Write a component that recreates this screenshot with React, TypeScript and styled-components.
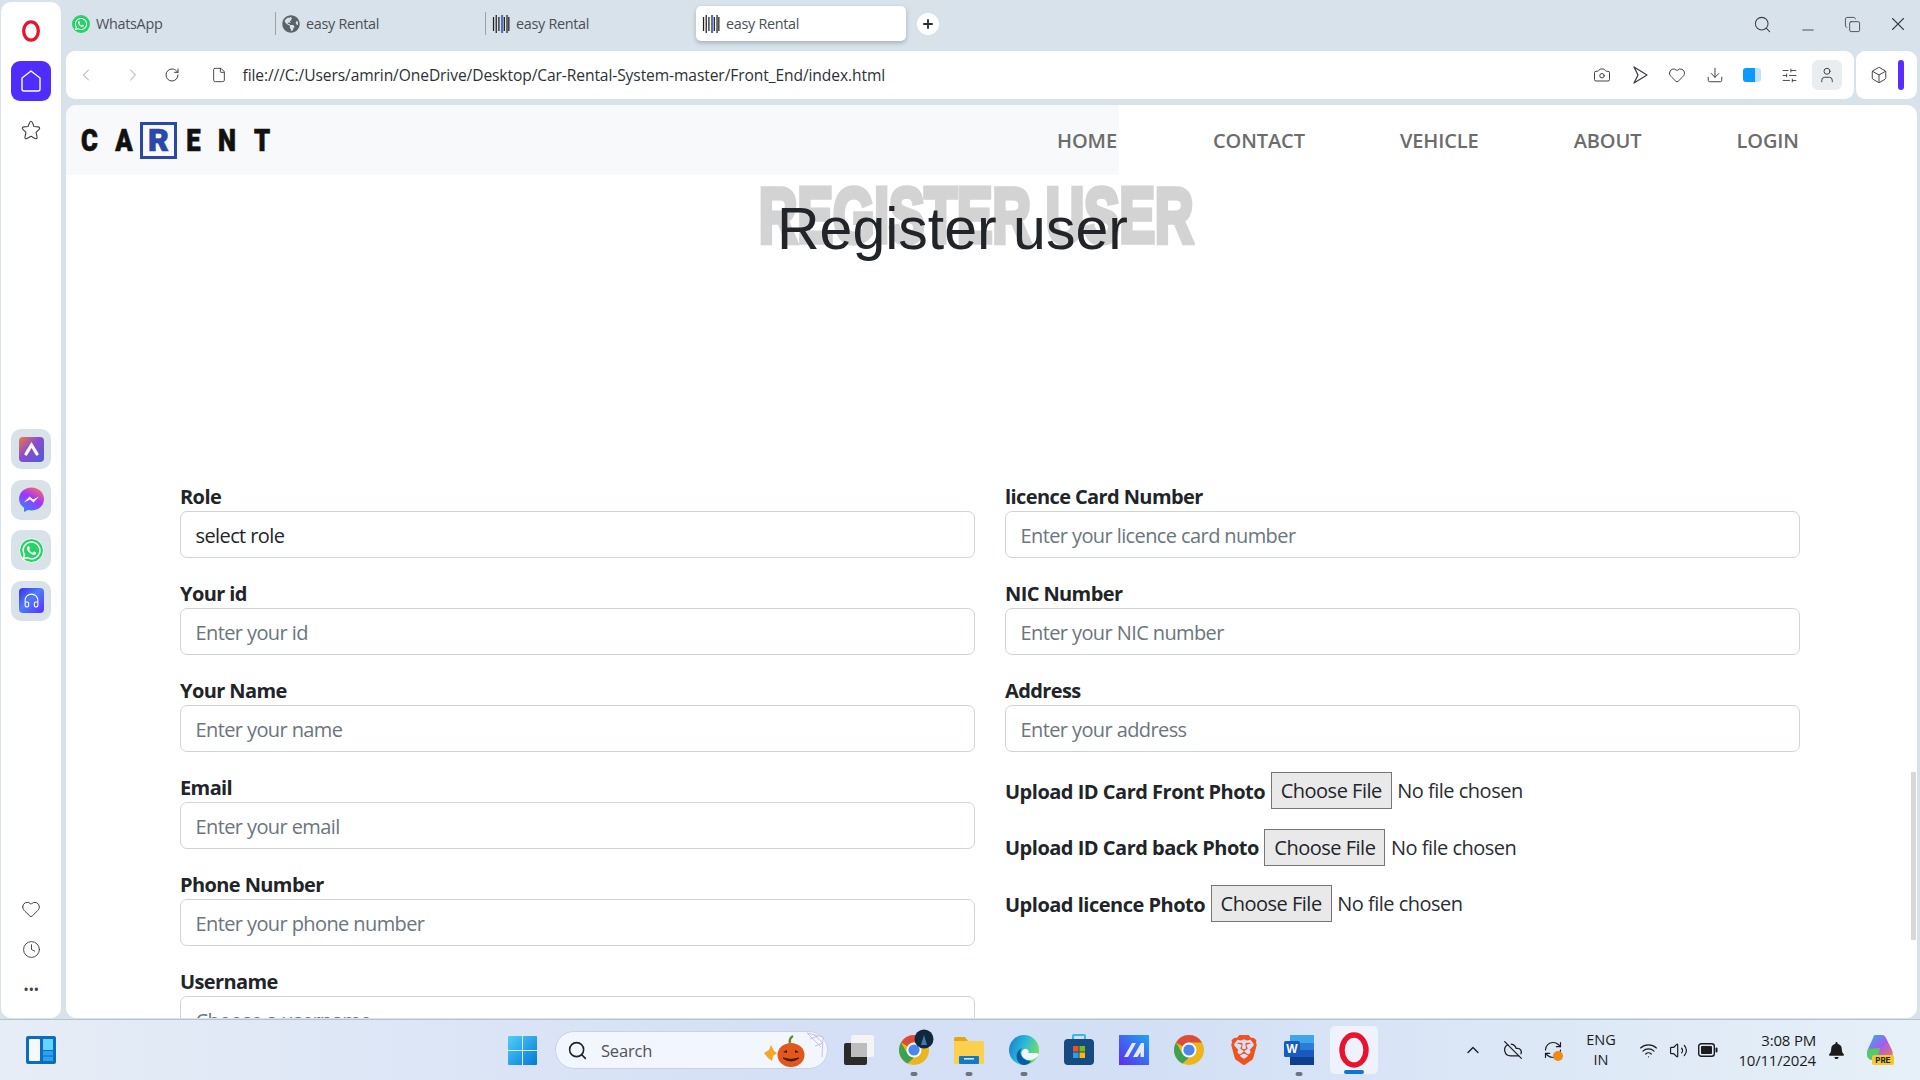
import styled, { createGlobalStyle } from "styled-components";
import {
	ChevronLeft,
	ChevronRight,
	ChevronUp,
	RotateCw,
	File,
	Camera,
	Heart,
	Download,
	Clock,
	Search,
	User,
	Box,
	SlidersHorizontal,
	Plus,
	X,
	Minus,
	Copy,
	Wifi,
	Volume2,
	CloudOff,
	RefreshCw,
	Headphones,
} from "lucide-react";
import { FaWhatsapp, FaGlobeAmericas, FaBell } from "react-icons/fa";
import { SiBrave } from "react-icons/si";

const UI_FONT = `"Open Sans", "Noto Sans", sans-serif`;

const leftFields = [
	{ label: "Role", value: "select role" },
	{ label: "Your id", placeholder: "Enter your id" },
	{ label: "Your Name", placeholder: "Enter your name" },
	{ label: "Email", placeholder: "Enter your email" },
	{ label: "Phone Number", placeholder: "Enter your phone number" },
	{ label: "Username", placeholder: "Choose a username" },
];

const rightFields = [
	{ label: "licence Card Number", placeholder: "Enter your licence card number" },
	{ label: "NIC Number", placeholder: "Enter your NIC number" },
	{ label: "Address", placeholder: "Enter your address" },
];

const uploads = ["Upload ID Card Front Photo", "Upload ID Card back Photo", "Upload licence Photo"];

function OperaLogo({ size = 22 }: { size?: number }) {
	return (
		<svg width={size} height={size} viewBox="0 0 24 24">
			<ellipse cx="12" cy="12" rx="8" ry="10" fill="none" stroke="#e8132f" strokeWidth="3.6" />
		</svg>
	);
}

function BarcodeIcon() {
	const bars = [1, 4, 7, 10, 13, 16, 18];
	return (
		<svg width="18" height="20" viewBox="0 0 20 20" preserveAspectRatio="none">
			{bars.map((x, i) => (
				<rect key={x} x={x} y={i % 2 ? 1 : 3} width={i === 3 ? 2.4 : 1.4} height={i % 2 ? 18 : 14} fill={i === 3 ? "#5470c6" : "#222"} />
			))}
		</svg>
	);
}

function HomeGlyph() {
	return (
		<svg width="22" height="24" viewBox="0 0 22 24" fill="none" stroke="#fff" strokeWidth="1.4">
			<path d="M11 2 L20 9 V20 a2 2 0 0 1 -2 2 H4 a2 2 0 0 1 -2 -2 V9 Z" strokeLinejoin="round" />
		</svg>
	);
}

function StarGlyph() {
	return (
		<svg width="22" height="22" viewBox="0 0 24 24" fill="none" stroke="#3a3f44" strokeWidth="1.2" strokeLinejoin="round">
			<path d="M12 2.5 C13 2.5 13.5 3.5 14 5 L15.2 8.2 L19.8 8.6 C21.6 8.8 22 10.2 20.8 11.4 L17.5 14.6 L18.6 19.6 C19 21.2 17.8 22 16.4 21.2 L12 18.8 L7.6 21.2 C6.2 22 5 21.2 5.4 19.6 L6.5 14.6 L3.2 11.4 C2 10.2 2.4 8.8 4.2 8.6 L8.8 8.2 L10 5 C10.5 3.5 11 2.5 12 2.5 Z" />
		</svg>
	);
}

function PlayGlyph() {
	return (
		<svg width="18" height="20" viewBox="0 0 18 20" fill="none" stroke="#3a3f44" strokeWidth="1.3" strokeLinejoin="round">
			<path d="M3 2 L16 10 L3 18 L7 10 Z" />
		</svg>
	);
}

function ArcAppIcon() {
	return (
		<svg width="25" height="25" viewBox="0 0 25 25">
			<defs>
				<linearGradient id="arcBg" x1="0" y1="0" x2="1" y2="1">
					<stop offset="0" stopColor="#ee7a3c" />
					<stop offset="0.45" stopColor="#8a4bd0" />
					<stop offset="1" stopColor="#4a5fd6" />
				</linearGradient>
			</defs>
			<rect width="25" height="25" rx="4" fill="url(#arcBg)" />
			<path d="M7 17 L12.5 8 L18 17" fill="none" stroke="#fff" strokeWidth="3.2" strokeLinecap="round" />
		</svg>
	);
}

function MessengerIcon() {
	return (
		<svg width="25" height="25" viewBox="0 0 25 25">
			<defs>
				<linearGradient id="msgBg" x1="0.2" y1="1" x2="0.8" y2="0">
					<stop offset="0" stopColor="#2f8cff" />
					<stop offset="0.55" stopColor="#a033ff" />
					<stop offset="1" stopColor="#ff6a68" />
				</linearGradient>
			</defs>
			<path d="M12.5 0.5 C19.5 0.5 25 5.5 25 12 C25 18.5 19.5 23.5 12.5 23.5 C11.3 23.5 10.1 23.3 9 23 L5 25 V20.8 C2 18.6 0 15.5 0 12 C0 5.5 5.5 0.5 12.5 0.5 Z" fill="url(#msgBg)" />
			<path d="M5 15.5 L10.5 9.5 L14 12.5 L20 9.5 L14.5 15.5 L11 12.5 Z" fill="#fff" />
		</svg>
	);
}

function WindowsLogo() {
	return (
		<svg width="29" height="29" viewBox="0 0 29 29">
			<defs>
				<linearGradient id="winBg" x1="0" y1="0" x2="1" y2="1">
					<stop offset="0" stopColor="#4fd0fb" />
					<stop offset="1" stopColor="#0577d4" />
				</linearGradient>
			</defs>
			<path d="M0 1 a1 1 0 0 1 1 -1 H14 V14 H0 Z M15 0 H28 a1 1 0 0 1 1 1 V14 H15 Z M0 15 H14 V29 H1 a1 1 0 0 1 -1 -1 Z M15 15 H29 V28 a1 1 0 0 1 -1 1 H15 Z" fill="url(#winBg)" />
		</svg>
	);
}

function WidgetsIcon() {
	return (
		<svg width="30" height="28" viewBox="0 0 30 28">
			<rect width="30" height="28" rx="2" fill="#0f6cbd" />
			<rect x="3" y="3" width="11" height="22" rx="1" fill="#f4f8fc" />
			<rect x="17" y="3" width="10" height="11" fill="#62d6fb" />
			<rect x="17" y="15" width="10" height="4.5" fill="#2aa3ef" />
			<rect x="17" y="20.5" width="10" height="4.5" fill="#2aa3ef" />
		</svg>
	);
}

function PumpkinDecor() {
	return (
		<svg width="62" height="38" viewBox="0 0 62 38">
			<path d="M44 2 L60 6 L59 26 M44 2 L58 16 M50 3 L59 11 M47 8 L55 5 M52 15 L60 12" stroke="#cdbfe6" strokeWidth="1" fill="none" />
			<path d="M1 22 L6 19 L8 14 L11 20 L14 22 L10 25 L9 30 L5 27 Z" fill="#f5a623" />
			<ellipse cx="28" cy="24" rx="13.5" ry="12" fill="#e2571c" />
			<path d="M27 12 Q26 7 30 5" stroke="#5e8a2b" strokeWidth="2.4" fill="none" />
			<path d="M20 21 l4 -2 v3 Z M32 19 l4 2 l-4 1 Z" fill="#43190a" />
			<path d="M20 27 Q28 33 36 27 Q28 30 20 27 Z" fill="#43190a" stroke="#43190a" />
		</svg>
	);
}

function TaskViewIcon() {
	return (
		<svg width="30" height="30" viewBox="0 0 30 30">
			<rect x="0" y="8" width="23" height="22" rx="2" fill="#2b2b2b" />
			<rect x="7" y="0" width="23" height="22" rx="2" fill="#f4f4f4" />
			<rect x="7" y="8" width="16" height="14" fill="#bdbdbd" />
		</svg>
	);
}

function ChromeLogo({ badge }: { badge?: boolean }) {
	return (
		<svg width="34" height="34" viewBox="0 0 34 34" overflow="visible">
			<circle cx="17" cy="17" r="15" fill="#e9b71d" />
			<path d="M17 2 A15 15 0 0 1 30 9.5 H17 A7.5 7.5 0 0 0 10.5 13.3 L4 9.5 A15 15 0 0 1 17 2 Z" fill="#dd4b3b" />
			<path d="M4 9.5 L10.5 20.8 A7.5 7.5 0 0 0 17 24.5 L10.5 30.5 A15 15 0 0 1 4 9.5 Z" fill="#3ba153" />
			<circle cx="17" cy="17" r="7.5" fill="#fff" />
			<circle cx="17" cy="17" r="5.6" fill="#4a86ee" />
			{badge && <circle cx="27" cy="6" r="9.5" fill="#10273f" />}
			{badge && <path d="M24 12 L27 2 L30 12 Z" fill="#3a7ea8" />}
		</svg>
	);
}

function ExplorerIcon() {
	return (
		<svg width="30" height="27" viewBox="0 0 30 27">
			<path d="M0 2 a2 2 0 0 1 2 -2 H11 L14 4 H0 Z" fill="#e2a40f" />
			<rect y="4" width="30" height="23" rx="1.5" fill="#fcd04f" />
			<rect x="5" y="19" width="20" height="8" rx="1" fill="#1378c8" />
			<rect x="10" y="21" width="10" height="1.6" fill="#cfe7fb" />
		</svg>
	);
}

function EdgeIcon() {
	return (
		<svg width="30" height="30" viewBox="0 0 30 30">
			<defs>
				<linearGradient id="edgeBg" x1="0" y1="0" x2="1" y2="0.4">
					<stop offset="0" stopColor="#1679c9" />
					<stop offset="0.55" stopColor="#2bb9d9" />
					<stop offset="1" stopColor="#6fdc6a" />
				</linearGradient>
			</defs>
			<circle cx="15" cy="15" r="15" fill="url(#edgeBg)" />
			<path d="M30 19 C26 27 14 27 12.5 19 C12 15 16 12 19 15 C20 16 20 17 19 18 L27 18 Z" fill="#f2f6fd" />
			<path d="M15 30 C6 29 5 16 13 13 C9 18 13 26 22 26 C20 29 17 30 15 30 Z" fill="#0c59a4" />
		</svg>
	);
}

function StoreIcon() {
	return (
		<svg width="30" height="32" viewBox="0 0 30 32">
			<path d="M9 6 V2 a1 1 0 0 1 1 -1 H20 a1 1 0 0 1 1 1 V6" fill="none" stroke="#39b6ea" strokeWidth="2" />
			<rect y="5" width="30" height="26" rx="4" fill="#174a82" />
			<rect x="9" y="12" width="5.5" height="5.5" fill="#f25022" />
			<rect x="15.5" y="12" width="5.5" height="5.5" fill="#7fba00" />
			<rect x="9" y="18.5" width="5.5" height="5.5" fill="#2a9fe6" />
			<rect x="15.5" y="18.5" width="5.5" height="5.5" fill="#ffb900" />
		</svg>
	);
}

function MaxIcon() {
	return (
		<svg width="30" height="30" viewBox="0 0 30 30">
			<defs>
				<linearGradient id="maxBg" x1="0" y1="1" x2="1" y2="0">
					<stop offset="0" stopColor="#5b2df0" />
					<stop offset="1" stopColor="#1fa4f4" />
				</linearGradient>
			</defs>
			<rect width="30" height="30" fill="url(#maxBg)" />
			<path d="M5 22 L13 8 H17 L9 22 Z M14 22 L22 8 H25 V22 H21.5 V17 L18.5 22 Z" fill="#e9e9f7" />
		</svg>
	);
}

function WordIcon() {
	return (
		<svg width="30" height="30" viewBox="0 0 30 30">
			<rect x="6" y="0" width="24" height="8" fill="#41a5ee" />
			<rect x="6" y="8" width="24" height="7" fill="#2b7cd3" />
			<rect x="6" y="15" width="24" height="7" fill="#185abd" />
			<rect x="6" y="22" width="24" height="8" fill="#103f91" />
			<rect x="0" y="6" width="16" height="16" rx="1.5" fill="#185abd" />
			<text x="8" y="18" textAnchor="middle" fontSize="12" fontWeight="700" fontFamily="Liberation Sans" fill="#fff">W</text>
		</svg>
	);
}

function CopilotIcon() {
	return (
		<svg width="30" height="30" viewBox="0 0 30 30">
			<defs>
				<linearGradient id="copBg" x1="0" y1="0" x2="1" y2="1">
					<stop offset="0" stopColor="#22b8ea" />
					<stop offset="0.5" stopColor="#a45cf0" />
					<stop offset="1" stopColor="#f57a4a" />
				</linearGradient>
			</defs>
			<path d="M10 0 H17 C19 0 20 1 21 3 L26 13 C29 18 28 24 24 24 H6 C2 24 1 18 3 14 L8 3 C8.5 1 9 0 10 0 Z" fill="url(#copBg)" />
			<path d="M3 14 C1 19 2 25 7 25 L12 25 L15 13 Z" fill="#55c96a" />
			<rect x="7" y="20" width="22" height="10" rx="2" fill="#f3c92f" />
			<text x="18" y="28" textAnchor="middle" fontSize="8.5" fontWeight="700" fontFamily="Liberation Mono" fill="#222">PRE</text>
		</svg>
	);
}

function BatteryIcon() {
	return (
		<svg width="20" height="14" viewBox="0 0 20 14">
			<rect x="0.7" y="0.7" width="15.6" height="12.6" rx="2.5" fill="none" stroke="#1c1c1c" strokeWidth="1.4" />
			<rect x="3" y="3" width="11" height="8" rx="1" fill="#1c1c1c" />
			<rect x="17.5" y="4.5" width="2" height="5" rx="1" fill="#1c1c1c" />
		</svg>
	);
}

function FormField({ label, placeholder, value }: { label: string; placeholder?: string; value?: string }) {
	return (
		<Field>
			<FieldLabel>{label}</FieldLabel>
			<TextInput readOnly placeholder={placeholder} value={value ?? ""} />
		</Field>
	);
}

export default function App() {
	return (
		<>
			<GlobalStyle />
			<Desktop>
				<BrowserWindow>
					<Sidebar>
						<SideLogo>
							<OperaLogo />
						</SideLogo>
						<HomeButton>
							<HomeGlyph />
						</HomeButton>
						<SideIcon>
							<StarGlyph />
						</SideIcon>
						<AppStack>
							<AppTile>
								<ArcAppIcon />
							</AppTile>
							<AppTile>
								<MessengerIcon />
							</AppTile>
							<AppTile>
								<WhatsAppBadge>
									<FaWhatsapp size={21} color="#fff" />
								</WhatsAppBadge>
							</AppTile>
							<AppTile>
								<HeadsetBadge>
									<Headphones size={17} strokeWidth={1.5} color="#fff" />
								</HeadsetBadge>
							</AppTile>
						</AppStack>
						<SideBottom>
							<BottomIcon>
								<Heart size={20} strokeWidth={1.2} />
							</BottomIcon>
							<BottomIcon>
								<Clock size={19} strokeWidth={1.2} />
							</BottomIcon>
							<SideDots>•••</SideDots>
						</SideBottom>
					</Sidebar>

					<MainColumn>
						<TabStrip>
							<Tab>
								<WhatsAppTabIcon>
									<FaWhatsapp size={14} color="#fff" />
								</WhatsAppTabIcon>
								<TabTitle>WhatsApp</TabTitle>
							</Tab>
							<Tab $divider>
								<FaGlobeAmericas size={18} color="#5c6368" />
								<TabTitle>easy Rental</TabTitle>
							</Tab>
							<Tab $divider>
								<BarcodeIcon />
								<TabTitle>easy Rental</TabTitle>
							</Tab>
							<Tab $active>
								<BarcodeIcon />
								<TabTitle>easy Rental</TabTitle>
							</Tab>
							<NewTab>
								<Plus size={14} strokeWidth={3.2} />
							</NewTab>
							<WindowControls>
								<WindowButton>
									<Search size={19} strokeWidth={1.3} />
								</WindowButton>
								<WindowButton $low>
									<Minus size={18} strokeWidth={1.2} />
								</WindowButton>
								<WindowButton>
									<Copy size={17} strokeWidth={1.2} />
								</WindowButton>
								<WindowButton>
									<X size={22} strokeWidth={1.2} />
								</WindowButton>
							</WindowControls>
						</TabStrip>

						<ToolRow>
							<AddressBar>
								<NavGlyph $gap={0} $muted>
									<ChevronLeft size={20} strokeWidth={1.2} />
								</NavGlyph>
								<NavGlyph $gap={23} $muted>
									<ChevronRight size={20} strokeWidth={1.2} />
								</NavGlyph>
								<NavGlyph $gap={15}>
									<RotateCw size={16} strokeWidth={1.5} />
								</NavGlyph>
								<NavGlyph $gap={23}>
									<File size={16} strokeWidth={1.4} />
								</NavGlyph>
								<UrlText>file:///C:/Users/amrin/OneDrive/Desktop/Car-Rental-System-master/Front_End/index.html</UrlText>
								<AddressTools>
									<ToolGlyph>
										<Camera size={18} strokeWidth={1.3} />
									</ToolGlyph>
									<ToolGlyph>
										<PlayGlyph />
									</ToolGlyph>
									<ToolGlyph>
										<Heart size={18} strokeWidth={1.3} />
									</ToolGlyph>
									<ToolGlyph>
										<Download size={18} strokeWidth={1.3} />
									</ToolGlyph>
									<ToolGlyph>
										<BatteryPill />
									</ToolGlyph>
									<ToolGlyph>
										<SlidersHorizontal size={17} strokeWidth={1.3} />
									</ToolGlyph>
									<ProfileGlyph>
										<User size={18} strokeWidth={1.3} />
									</ProfileGlyph>
								</AddressTools>
							</AddressBar>
							<ExtensionBox>
								<Box size={18} strokeWidth={1.3} />
								<AccentBar />
							</ExtensionBox>
						</ToolRow>

						<Page>
							<Navbar>
								<BrandPane>
									<Logo>
										<LogoLetter $w={15}>C</LogoLetter>
										<LogoLetter $w={20}>A</LogoLetter>
										<LogoBoxed>R</LogoBoxed>
										<LogoLetter $w={15}>E</LogoLetter>
										<LogoLetter $w={20}>N</LogoLetter>
										<LogoLetter $w={16}>T</LogoLetter>
									</Logo>
									<NavLink>HOME</NavLink>
								</BrandPane>
								<NavLinks>
									<NavLink>CONTACT</NavLink>
									<NavLink>VEHICLE</NavLink>
									<NavLink>ABOUT</NavLink>
									<NavLink>LOGIN</NavLink>
								</NavLinks>
							</Navbar>

							<Hero>
								<GhostTitle>REGISTER USER</GhostTitle>
								<HeroTitle>Register user</HeroTitle>
							</Hero>

							<FormGrid>
								<FormColumn>
									{leftFields.map((f) => (
										<FormField key={f.label} {...f} />
									))}
								</FormColumn>
								<FormColumn>
									{rightFields.map((f) => (
										<FormField key={f.label} {...f} />
									))}
									{uploads.map((label) => (
										<UploadRow key={label}>
											<UploadLabel>{label}</UploadLabel>
											<ChooseFile type="button">Choose File</ChooseFile>
											<FileStatus>No file chosen</FileStatus>
										</UploadRow>
									))}
								</FormColumn>
							</FormGrid>
							<ScrollThumb />
						</Page>
					</MainColumn>
				</BrowserWindow>

				<Taskbar>
					<WidgetsSlot>
						<WidgetsIcon />
					</WidgetsSlot>
					<TaskCenter>
						<TaskSlot>
							<WindowsLogo />
						</TaskSlot>
						<SearchPill>
							<Search size={21} strokeWidth={1.8} color="#222" />
							<SearchText>Search</SearchText>
							<PumpkinSpot>
								<PumpkinDecor />
							</PumpkinSpot>
						</SearchPill>
						<TaskSlot>
							<TaskViewIcon />
						</TaskSlot>
						<TaskSlot $running>
							<ChromeLogo badge />
						</TaskSlot>
						<TaskSlot $running>
							<ExplorerIcon />
						</TaskSlot>
						<TaskSlot $running>
							<EdgeIcon />
						</TaskSlot>
						<TaskSlot>
							<StoreIcon />
						</TaskSlot>
						<TaskSlot>
							<MaxIcon />
						</TaskSlot>
						<TaskSlot>
							<ChromeLogo />
						</TaskSlot>
						<TaskSlot>
							<SiBrave size={30} color="#f1501f" />
						</TaskSlot>
						<TaskSlot $running>
							<WordIcon />
						</TaskSlot>
						<TaskSlot $active>
							<OperaLogo size={36} />
						</TaskSlot>
					</TaskCenter>
					<Tray>
						<TraySlot>
							<ChevronUp size={20} strokeWidth={1.6} />
						</TraySlot>
						<TraySlot>
							<CloudOff size={20} strokeWidth={1.5} />
						</TraySlot>
						<TraySlot>
							<RefreshCw size={20} strokeWidth={1.4} />
							<SyncDot />
						</TraySlot>
						<LangBlock>
							<span>ENG</span>
							<span>IN</span>
						</LangBlock>
						<SystemIcons>
							<SystemSlot>
								<Wifi size={19} strokeWidth={1.5} />
							</SystemSlot>
							<SystemSlot>
								<Volume2 size={19} strokeWidth={1.5} />
							</SystemSlot>
							<SystemSlot>
								<BatteryIcon />
							</SystemSlot>
						</SystemIcons>
						<ClockBlock>
							<span>3:08 PM</span>
							<span>10/11/2024</span>
						</ClockBlock>
						<TraySlot>
							<FaBell size={17} color="#1c1c1c" />
						</TraySlot>
						<CopilotSlot>
							<CopilotIcon />
						</CopilotSlot>
					</Tray>
				</Taskbar>
			</Desktop>
		</>
	);
}

const GlobalStyle = createGlobalStyle`
	html, body {
		margin: 0;
		padding: 0;
		width: 1920px;
		height: 1080px;
		overflow: hidden;
		font-family: ${UI_FONT};
	}
	* {
		box-sizing: border-box;
	}
`;

const Desktop = styled.div`
	width: 1920px;
	height: 1080px;
	display: flex;
	flex-direction: column;
	background: #d8e2eb;
	overflow: hidden;
`;

const BrowserWindow = styled.div`
	height: 1019px;
	display: flex;
	flex: none;
`;

const Sidebar = styled.aside`
	width: 60px;
	margin: 2px 5px 1px 1px;
	padding-top: 10px;
	background: #fff;
	border-radius: 10px;
	display: flex;
	flex-direction: column;
	align-items: center;
	color: #3a3f44;
`;

const SideLogo = styled.div`
	height: 38px;
	display: flex;
	align-items: center;
`;

const HomeButton = styled.div`
	width: 40px;
	height: 40px;
	margin-top: 11px;
	background: #4f2dff;
	border-radius: 9px;
	display: flex;
	align-items: center;
	justify-content: center;
`;

const SideIcon = styled.div`
	height: 40px;
	margin-top: 9px;
	display: flex;
	align-items: center;
	justify-content: center;
`;

const BottomIcon = styled.div`
	height: 40px;
	display: flex;
	align-items: center;
	justify-content: center;
`;

const AppStack = styled.div`
	margin-top: 279px;
	display: flex;
	flex-direction: column;
	gap: 10.5px;
`;

const AppTile = styled.div`
	width: 40px;
	height: 40px;
	background: #d8e2e8;
	border-radius: 10px;
	display: flex;
	align-items: center;
	justify-content: center;
`;

const WhatsAppBadge = styled.div`
	width: 25px;
	height: 25px;
	background: #25d366;
	border: 1.5px solid #fff;
	border-radius: 50%;
	display: flex;
	align-items: center;
	justify-content: center;
`;

const HeadsetBadge = styled.div`
	width: 25px;
	height: 25px;
	border-radius: 4px;
	background: linear-gradient(135deg, #3a2df0, #4f7cff 45%, #5a2dff);
	display: flex;
	align-items: center;
	justify-content: center;
`;

const SideBottom = styled.div`
	margin-top: auto;
	margin-bottom: 9px;
	display: flex;
	flex-direction: column;
	align-items: center;
`;

const SideDots = styled.div`
	height: 40px;
	font-size: 15px;
	letter-spacing: -0.5px;
	display: flex;
	align-items: center;
	color: #444;
`;

const MainColumn = styled.div`
	flex: 1;
	min-width: 0;
	margin-right: 3px;
	display: flex;
	flex-direction: column;
`;

const TabStrip = styled.div`
	height: 51px;
	flex: none;
	display: flex;
	align-items: flex-start;
	padding-top: 6px;
`;

const Tab = styled.div<{ $active?: boolean; $divider?: boolean }>`
	width: 210px;
	height: 35px;
	padding-left: 6px;
	display: flex;
	align-items: center;
	gap: 6px;
	font-size: 14.4px;
	color: #4a5055;
	background: ${({ $active }) => ($active ? "#fff" : "transparent")};
	border-radius: ${({ $active }) => ($active ? "5px" : "0")};
	box-shadow: ${({ $active }) => ($active ? "0 2px 4px rgba(60, 80, 100, 0.35)" : "none")};
	position: relative;
	&::before {
		content: "";
		display: ${({ $divider }) => ($divider ? "block" : "none")};
		position: absolute;
		left: -1px;
		top: 6px;
		bottom: 6px;
		width: 1px;
		background: #9aa4ad;
	}
`;

const WhatsAppTabIcon = styled.div`
	width: 18px;
	height: 18px;
	background: #25d366;
	border-radius: 50%;
	display: flex;
	align-items: center;
	justify-content: center;
`;

const TabTitle = styled.span`
	letter-spacing: -0.3px;
	white-space: nowrap;
`;

const NewTab = styled.div`
	width: 22px;
	height: 22px;
	margin: 7px 0 0 11px;
	background: #fff;
	border-radius: 50%;
	display: flex;
	align-items: center;
	justify-content: center;
	color: #26303a;
`;

const WindowControls = styled.div`
	margin-left: auto;
	margin-right: -3px;
	display: flex;
	height: 36px;
`;

const WindowButton = styled.div<{ $low?: boolean }>`
	width: 45px;
	height: 36px;
	padding-top: ${({ $low }) => ($low ? "12px" : "0")};
	display: flex;
	align-items: center;
	justify-content: center;
	color: #3a3f44;
`;

const ToolRow = styled.div`
	height: 48px;
	flex: none;
	display: flex;
	gap: 2px;
	margin-bottom: 6px;
`;

const AddressBar = styled.div`
	flex: 1;
	background: #fff;
	border-radius: 9px;
	display: flex;
	align-items: center;
	padding-left: 8px;
`;

const NavGlyph = styled.div<{ $muted?: boolean; $gap: number }>`
	width: 24px;
	margin-left: ${({ $gap }) => $gap}px;
	display: flex;
	justify-content: center;
	color: ${({ $muted }) => ($muted ? "#9ba3aa" : "#3a3f44")};
`;

const UrlText = styled.span`
	margin-left: 11.5px;
	font-size: 15.6px;
	letter-spacing: -0.1px;
	color: #2d3135;
	white-space: nowrap;
`;

const AddressTools = styled.div`
	margin-left: auto;
	margin-right: 12px;
	display: flex;
	align-items: center;
`;

const ToolGlyph = styled.div`
	width: 37.4px;
	height: 30px;
	display: flex;
	align-items: center;
	justify-content: center;
	color: #3a3f44;
`;

const ProfileGlyph = styled.div`
	width: 30px;
	height: 30px;
	margin-left: 4px;
	background: #e9edf0;
	border-radius: 6px;
	display: flex;
	align-items: center;
	justify-content: center;
	color: #3a3f44;
`;

const BatteryPill = styled.div`
	width: 18px;
	height: 14px;
	border-radius: 3px;
	background: linear-gradient(90deg, #0a9bff 65%, #bfe3ff 65%);
`;

const ExtensionBox = styled.div`
	width: 61px;
	background: #fff;
	border-radius: 9px;
	display: flex;
	align-items: center;
	padding-left: 14px;
	gap: 10px;
	color: #3a3f44;
`;

const Page = styled.main`
	flex: 1;
	min-height: 0;
	margin-bottom: 1px;
	background: #fff;
	border-radius: 10px;
	overflow: hidden;
	position: relative;
	color: #212529;
`;

const AccentBar = styled.div`
	width: 6px;
	height: 30px;
	background: #5a2dff;
	border-radius: 3px;
`;

const Navbar = styled.nav`
	height: 70px;
	display: flex;
`;

const BrandPane = styled.div`
	width: 1053px;
	padding: 0 2px 0 16px;
	background: #f8f9fa;
	display: flex;
	align-items: center;
	justify-content: space-between;
`;

const Logo = styled.div`
	display: flex;
	align-items: center;
	gap: 16.5px;
	font-family: Roboto, "Open Sans", sans-serif;
	font-weight: 900;
	font-size: 32px;
	-webkit-text-stroke: 0.7px currentColor;
	color: #111;
`;

const LogoLetter = styled.span<{ $w: number }>`
	width: ${({ $w }) => $w}px;
	line-height: 36px;
	display: flex;
	justify-content: center;
	transform: scaleX(0.8);
`;

const LogoBoxed = styled.span`
	width: 37px;
	height: 37px;
	margin: 0 -8px 0 -10px;
	border: 3.5px solid #2a47ab;
	color: #2a47ab;
	display: flex;
	align-items: center;
	justify-content: center;
`;

const NavLinks = styled.div`
	flex: 1;
	display: flex;
	align-items: center;
	gap: 95px;
	padding-left: 94px;
`;

const NavLink = styled.a`
	font-size: 20px;
	font-weight: 600;
	letter-spacing: -0.1px;
	color: #6c6c6c;
`;

const Hero = styled.section`
	height: 306px;
	position: relative;
`;

const GhostTitle = styled.div`
	width: 438px;
	margin-left: 693px;
	padding-top: 1px;
	font-family: "Liberation Sans", sans-serif;
	font-size: 78px;
	font-weight: 700;
	line-height: 1.02;
	color: #d3d3d3;
	-webkit-text-stroke: 5.5px #d3d3d3;
	white-space: nowrap;
	transform: scaleX(0.682);
	transform-origin: left top;
`;

const HeroTitle = styled.h1`
	position: absolute;
	left: 711px;
	top: 19px;
	margin: 0;
	font-family: "Liberation Sans", sans-serif;
	font-size: 59px;
	font-weight: 400;
	line-height: 1.2;
	color: #212529;
	white-space: nowrap;
`;

const FormGrid = styled.form`
	display: grid;
	grid-template-columns: 795px 795px;
	column-gap: 30px;
	padding-left: 114px;
`;

const FormColumn = styled.div`
	display: flex;
	flex-direction: column;
`;

const Field = styled.div`
	height: 97px;
	flex: none;
`;

const FieldLabel = styled.label`
	display: block;
	height: 30px;
	line-height: 32px;
	font-size: 20px;
	font-weight: 700;
	letter-spacing: -0.6px;
	color: #212529;
	white-space: nowrap;
`;

const TextInput = styled.input`
	display: block;
	width: 100%;
	height: 47px;
	padding: 2px 15px 0 14.5px;
	border: 1px solid #ced4da;
	border-radius: 7px;
	background: #fff;
	font-family: ${UI_FONT};
	font-size: 20px;
	letter-spacing: -0.6px;
	color: #212529;
	outline: none;
	&::placeholder {
		color: #6c757d;
		opacity: 1;
	}
`;

const UploadRow = styled.div`
	height: 56.5px;
	flex: none;
	padding-bottom: 19px;
	display: flex;
	align-items: center;
	gap: 5.5px;
`;

const UploadLabel = styled(FieldLabel).attrs({ as: "span" })`
	letter-spacing: -0.5px;
`;

const ChooseFile = styled.button`
	height: 37px;
	padding: 0 9px;
	border: 1px solid #767676;
	border-radius: 0;
	background: #e9e9e9;
	font-family: ${UI_FONT};
	font-size: 20px;
	letter-spacing: -0.5px;
	color: #212529;
`;

const FileStatus = styled.span`
	font-size: 20px;
	letter-spacing: -0.5px;
	color: #2a2e32;
`;

const ScrollThumb = styled.div`
	position: absolute;
	right: 1px;
	top: 667px;
	width: 5px;
	height: 168px;
	background: #d8d8d8;
`;

const Taskbar = styled.footer`
	height: 61px;
	flex: none;
	display: flex;
	align-items: center;
	border-top: 1px solid #b7c2cf;
	background: linear-gradient(90deg, #e6edf6 0%, #d5e0f6 40%, #d3dff5 60%, #e6f0f8 100%);
`;

const WidgetsSlot = styled.div`
	width: 30px;
	margin-left: 26px;
	display: flex;
`;

const TaskCenter = styled.div`
	margin-left: 439px;
	display: flex;
	align-items: center;
`;

const TaskSlot = styled.div<{ $running?: boolean; $active?: boolean }>`
	width: ${({ $active }) => ($active ? "48px" : "55px")};
	height: 48px;
	margin: ${({ $active }) => ($active ? "0 3.5px" : "0")};
	display: flex;
	align-items: center;
	justify-content: center;
	position: relative;
	background: ${({ $active }) => ($active ? "#eef2fa" : "transparent")};
	border-radius: 5px;
	&::after {
		content: "";
		display: ${({ $running, $active }) => ($running || $active ? "block" : "none")};
		position: absolute;
		bottom: ${({ $active }) => ($active ? "0" : "-2px")};
		left: 50%;
		transform: translateX(-50%);
		width: ${({ $active }) => ($active ? "20px" : "7px")};
		height: 4px;
		border-radius: 2px;
		background: ${({ $active }) => ($active ? "#0a78d4" : "#6d747c")};
	}
`;

const SearchPill = styled.div`
	width: 273px;
	height: 38px;
	margin: 0 3px 0 5px;
	padding-left: 11px;
	border-radius: 19px;
	background: #f2f6fe;
	border: 1px solid #c9d2e2;
	display: flex;
	align-items: center;
	gap: 13px;
	position: relative;
`;

const SearchText = styled.span`
	font-size: 16.5px;
	letter-spacing: -0.2px;
	color: #4f5358;
`;

const PumpkinSpot = styled.div`
	position: absolute;
	right: 2px;
	top: -1px;
	line-height: 0;
`;

const Tray = styled.div`
	margin-left: 72px;
	display: flex;
	align-items: center;
	color: #1c1c1c;
`;

const TraySlot = styled.div`
	width: 40px;
	height: 40px;
	display: flex;
	align-items: center;
	justify-content: center;
	position: relative;
`;

const SyncDot = styled.div`
	position: absolute;
	right: 10px;
	bottom: 9px;
	width: 10px;
	height: 10px;
	border-radius: 50%;
	background: #f08a12;
`;

const LangBlock = styled.div`
	width: 56px;
	display: flex;
	flex-direction: column;
	align-items: center;
	font-size: 14.5px;
	line-height: 20px;
`;

const SystemIcons = styled.div`
	margin-left: 4px;
	display: flex;
`;

const SystemSlot = styled.div`
	width: 30px;
	display: flex;
	align-items: center;
	justify-content: center;
`;

const ClockBlock = styled.div`
	width: 93px;
	display: flex;
	flex-direction: column;
	align-items: flex-end;
	font-size: 15px;
	line-height: 20px;
	letter-spacing: -0.2px;
	white-space: nowrap;
`;

const CopilotSlot = styled.div`
	width: 30px;
	margin-left: 9px;
	line-height: 0;
`;
